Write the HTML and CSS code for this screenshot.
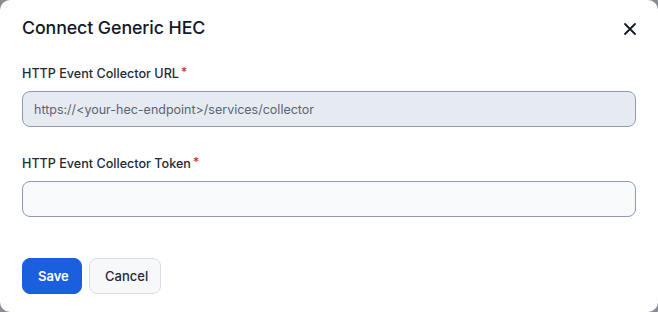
FILE: index.html
```html
<!DOCTYPE html>
<html>
<head>
<meta charset="utf-8">
<link rel="stylesheet" href="styles.css">
</head>
<body>
<div class="modal">
  <div class="header">
    <h2 class="title">Connect Generic HEC</h2>
    <button class="close" aria-label="Close">
      <svg width="14" height="14" viewBox="0 0 14 14"><path d="M2 2L12 12M12 2L2 12" stroke="#111827" stroke-width="1.8" stroke-linecap="round"/></svg>
    </button>
  </div>
  <div class="field">
    <label class="label">HTTP Event Collector URL<span class="req">*</span></label>
    <div class="input disabled">https://&lt;your-hec-endpoint&gt;/services/collector</div>
  </div>
  <div class="field">
    <label class="label">HTTP Event Collector Token<span class="req">*</span></label>
    <div class="input"></div>
  </div>
  <div class="actions">
    <button class="btn primary">Save</button>
    <button class="btn secondary">Cancel</button>
  </div>
</div>
</body>
</html>
```
FILE: styles.css
```css
html, body {
  margin: 0;
  padding: 0;
  width: 658px;
  height: 312px;
  background: #8a8d94;
  overflow: hidden;
}
.modal {
  box-sizing: border-box;
  width: 658px;
  height: 312px;
  background: #ffffff;
  border-radius: 10px;
  padding: 17px 22px 0 22px;
  font-family: Inter, "Liberation Sans", sans-serif;
  color: #111827;
}
.header {
  display: flex;
  align-items: center;
  justify-content: space-between;
  height: 22px;
}
.title {
  margin: 0;
  font-size: 17.8px;
  font-weight: 500;
  line-height: 22px;
  letter-spacing: -0.1px;
}
.close {
  border: none;
  background: none;
  padding: 0;
  width: 14px;
  height: 14px;
  display: flex;
  margin-right: -1px;
  margin-top: 1px;
}
.field {
  display: flex;
  flex-direction: column;
  margin-top: 27px;
}
.field + .field {
  margin-top: 29px;
}
.label {
  font-size: 12.6px;
  font-weight: 500;
  line-height: 16px;
  color: #1f2937;
  margin-bottom: 9px;
}
.req {
  color: #dc2626;
  margin-left: 2px;
  font-size: 12px;
  position: relative;
  top: -2px;
}
.input {
  box-sizing: border-box;
  height: 36px;
  border: 1px solid #8c9cb6;
  border-radius: 8px;
  background: #f8f9fb;
  padding: 0 11px;
  display: flex;
  align-items: center;
  font-size: 12.5px;
  color: #5b6472;
}
.input.disabled {
  background: #e6ebf2;
}
.actions {
  display: flex;
  gap: 7px;
  margin-top: 41px;
}
.btn {
  box-sizing: border-box;
  height: 36px;
  border-radius: 8px;
  font-family: Inter, "Liberation Sans", sans-serif;
  font-size: 13px;
  padding: 0 15px;
}
.primary {
  background: #1a5fde;
  color: #ffffff;
  border: 1px solid #1a5fde;
  font-weight: 600;
  width: 60px;
}
.secondary {
  background: #f6f8fa;
  color: #1f2937;
  border: 1px solid #d9dee6;
  font-weight: 500;
  width: 72px;
}
```
